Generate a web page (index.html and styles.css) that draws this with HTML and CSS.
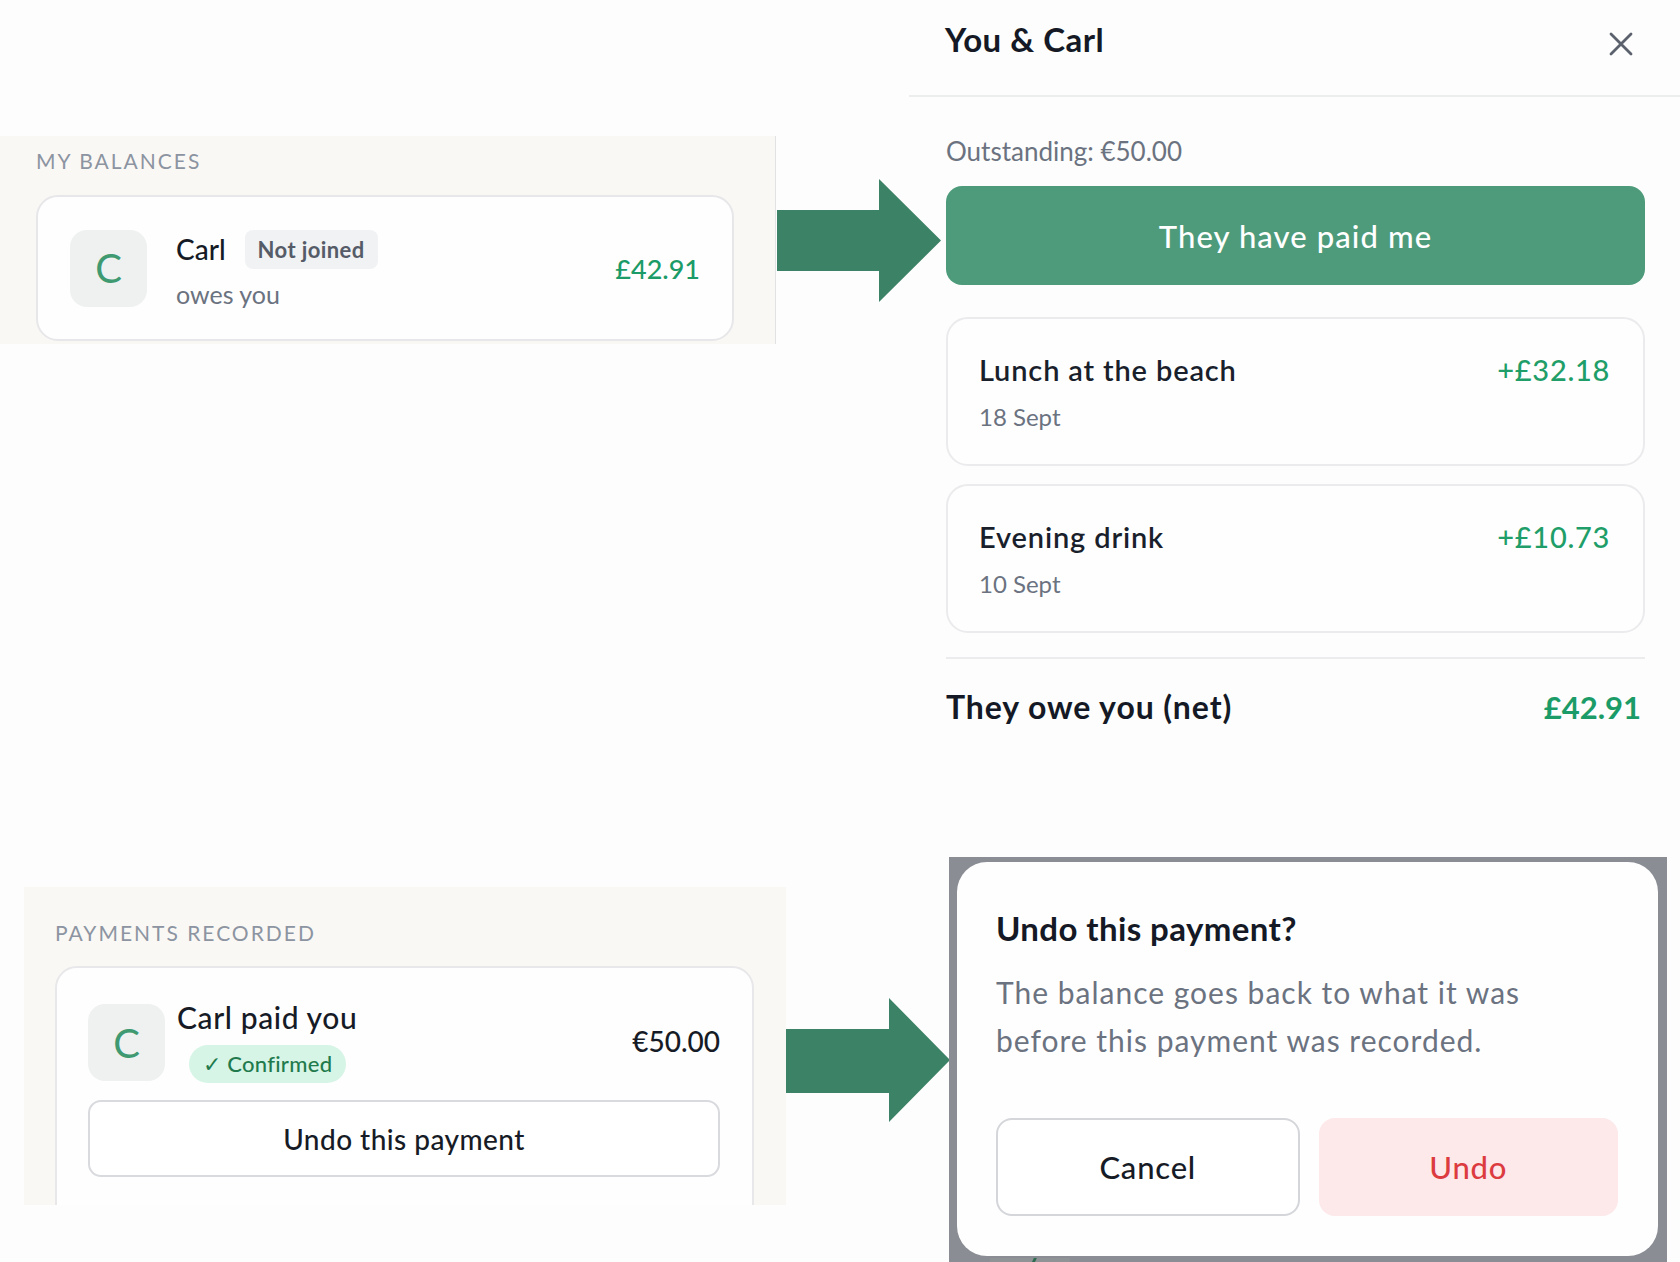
FILE: index.html
```html
<!DOCTYPE html>
<html lang="en">
<head>
<meta charset="utf-8">
<title>Settle up flow</title>
<link rel="stylesheet" href="styles.css">
</head>
<body>
<div class="canvas">

  <section class="shot shot-balances">
    <div class="section-label">My balances</div>
    <div class="balance-card">
      <div class="avatar">C</div>
      <div class="who">
        <div class="who-top"><span class="name">Carl</span><span class="badge-muted">Not joined</span></div>
        <div class="sub">owes you</div>
      </div>
      <div class="amount-pos">£42.91</div>
    </div>
  </section>

  <svg class="arrow arrow-1" width="164" height="123" viewBox="0 0 164 123" aria-hidden="true">
    <polygon points="0,31 102,31 102,0 164,61.5 102,123 102,92 0,92" fill="#3c8266"/>
  </svg>

  <section class="shot shot-detail">
    <header class="detail-head">
      <h1 class="detail-title">You &amp; Carl</h1>
      <span class="close" aria-label="Close">
        <svg width="24" height="24" viewBox="0 0 24 24"><path d="M2 2 L22 22 M22 2 L2 22" stroke="#5b626e" stroke-width="2.8" stroke-linecap="round" fill="none"/></svg>
      </span>
    </header>
    <div class="detail-body">
      <p class="outstanding">Outstanding: €50.00</p>
      <button class="btn-primary">They have paid me</button>
      <div class="expense">
        <div class="expense-row"><span class="expense-title">Lunch at the beach</span><span class="expense-amt">+£32.18</span></div>
        <div class="expense-date">18 Sept</div>
      </div>
      <div class="expense">
        <div class="expense-row"><span class="expense-title">Evening drink</span><span class="expense-amt">+£10.73</span></div>
        <div class="expense-date">10 Sept</div>
      </div>
      <div class="net">
        <span class="net-label">They owe you (net)</span>
        <span class="net-amt">£42.91</span>
      </div>
    </div>
  </section>

  <section class="shot shot-payments">
    <div class="section-label">Payments recorded</div>
    <div class="payment-card">
      <div class="payment-row">
        <div class="avatar">C</div>
        <div class="payment-info">
          <div class="payment-title">Carl paid you</div>
          <span class="badge-ok">✓ Confirmed</span>
        </div>
        <div class="payment-amt">€50.00</div>
      </div>
      <button class="btn-outline">Undo this payment</button>
    </div>
  </section>

  <svg class="arrow arrow-2" width="164" height="124" viewBox="0 0 164 124" aria-hidden="true">
    <polygon points="0,31 103,31 103,0 164,62 103,124 103,95 0,95" fill="#3c8266"/>
  </svg>

  <section class="shot shot-dialog">
    <div class="dialog">
      <h2 class="dialog-title">Undo this payment?</h2>
      <p class="dialog-text">The balance goes back to what it was before this payment was recorded.</p>
      <div class="dialog-actions">
        <button class="btn-cancel">Cancel</button>
        <button class="btn-danger">Undo</button>
      </div>
    </div>
    <div class="dim-peek"><span class="dim-mark"></span></div>
  </section>

</div>
</body>
</html>
```

FILE: styles.css
```css
* { box-sizing: border-box; }

body {
  margin: 0;
  background: #fcfdfc;
  font-family: "Lato", "Open Sans", sans-serif;
  color: #171c27;
}

.canvas {
  position: relative;
  width: 1680px;
  height: 1262px;
  overflow: hidden;
}

button {
  font-family: inherit;
  cursor: pointer;
}

/* free-canvas pieces of the composite */
.shot { position: absolute; overflow: hidden; }
.arrow { position: absolute; display: block; }
.arrow-1 { left: 777px; top: 179px; }
.arrow-2 { left: 786px; top: 998px; }

.section-label {
  font-size: 21px;
  line-height: 26px;
  letter-spacing: 2px;
  text-transform: uppercase;
  color: #8c94a1;
}

.avatar {
  flex: none;
  width: 77px;
  height: 77px;
  border-radius: 17px;
  background: #eef1f0;
  color: #3f9a72;
  font-size: 40px;
  font-weight: 400;
  display: flex;
  align-items: center;
  justify-content: center;
}

/* ---------- balances ---------- */
.shot-balances {
  left: 0;
  top: 136px;
  width: 776px;
  height: 208px;
  background: #faf8f5;
  border-right: 1px solid #e2e2e2;
  padding: 12px 0 0 36px;
}

.shot-balances .section-label { margin-bottom: 21px; }

.balance-card {
  width: 698px;
  height: 146px;
  background: #fefefe;
  border: 2px solid #e7e7ea;
  border-radius: 22px;
  display: flex;
  align-items: center;
  padding: 0 32px 0 32px;
}

.who { margin-left: 29px; }

.who-top {
  display: flex;
  align-items: center;
  gap: 19px;
  margin-top: 2px;
}

.name {
  font-size: 28px;
  font-weight: 500;
  color: #151a25;
}

.badge-muted {
  height: 39px;
  line-height: 39px;
  padding: 0 13px;
  border-radius: 8px;
  background: #f1f2f3;
  color: #555c68;
  font-size: 22px;
  letter-spacing: 0.4px;
  font-weight: 700;
}

.sub {
  margin-top: 10px;
  font-size: 25px;
  line-height: 30px;
  color: #6b7280;
}

.amount-pos {
  margin-left: auto;
  font-size: 27px;
  font-weight: 500;
  color: #1b9b67;
}

/* ---------- detail ---------- */
.shot-detail {
  left: 909px;
  top: 0;
  width: 771px;
  height: 760px;
}

.detail-head {
  height: 97px;
  border-bottom: 2px solid #eceeee;
  display: flex;
  align-items: center;
  justify-content: space-between;
  padding: 0 47px 17px 36px;
}

.detail-title {
  margin: 0;
  font-size: 33px;
  letter-spacing: 0.5px;
  font-weight: 700;
  color: #141925;
}

.close {
  display: flex;
  margin-top: 9px;
}

.detail-body {
  padding: 0 35px 0 37px;
}

.outstanding {
  margin: 37px 0 0;
  font-size: 26px;
  line-height: 34px;
  color: #6b7280;
}

.btn-primary {
  display: block;
  width: 100%;
  height: 99px;
  margin-top: 18px;
  border: none;
  border-radius: 16px;
  background: #4e9b7b;
  color: #ffffff;
  font-size: 31px;
  letter-spacing: 1.1px;
  font-weight: 500;
}

.expense {
  height: 149px;
  margin-top: 32px;
  border: 2px solid #ebebed;
  border-radius: 22px;
  background: #fefefe;
  padding: 32px 33px 0 31px;
}

.expense + .expense { margin-top: 18px; }

.expense-row {
  display: flex;
  justify-content: space-between;
  align-items: center;
  line-height: 38px;
}

.expense-title {
  font-size: 29px;
  letter-spacing: 0.85px;
  font-weight: 600;
  color: #1a1f2c;
}

.expense-amt {
  font-size: 29px;
  letter-spacing: 0.7px;
  font-weight: 500;
  color: #1f9e69;
}

.expense-date {
  margin-top: 12px;
  font-size: 24px;
  line-height: 31px;
  color: #6b7280;
}

.net {
  margin-top: 24px;
  border-top: 2px solid #ececee;
  padding: 28px 4px 0 0;
  display: flex;
  justify-content: space-between;
  align-items: center;
  line-height: 40px;
  font-size: 32px;
  font-weight: 700;
}

.net-label { color: #141925; letter-spacing: 0.9px; }
.net-amt { color: #1b9b67; font-size: 31px; }

/* ---------- payments ---------- */
.shot-payments {
  left: 24px;
  top: 887px;
  width: 762px;
  height: 318px;
  background: #faf8f5;
  padding: 33px 0 0 31px;
}

.shot-payments .section-label { margin-bottom: 20px; }

.payment-card {
  width: 699px;
  height: 300px;
  background: #fefefe;
  border: 2px solid #e8e8ea;
  border-radius: 22px;
  padding: 34px 32px 0 31px;
}

.payment-row {
  display: flex;
  align-items: center;
}

.payment-info {
  margin-left: 12px;
  display: flex;
  flex-direction: column;
  align-items: flex-start;
}

.payment-title {
  font-size: 30px;
  letter-spacing: 0.6px;
  font-weight: 500;
  line-height: 36px;
  margin-top: -3px;
  color: #161b26;
}

.badge-ok {
  margin: 10px 0 0 12px;
  height: 38px;
  line-height: 38px;
  padding: 0 14px;
  border-radius: 19px;
  background: #d6f5e6;
  color: #1f7a4d;
  font-size: 22px;
  letter-spacing: 0.3px;
  font-weight: 500;
}

.payment-amt {
  margin-left: auto;
  margin-bottom: 4px;
  font-size: 28px;
  font-weight: 500;
  color: #161b26;
}

.btn-outline {
  display: block;
  width: 632px;
  height: 77px;
  margin-top: 17px;
  border: 2px solid #d9dade;
  border-radius: 13px;
  background: #ffffff;
  color: #161b26;
  font-size: 28px;
  letter-spacing: 0.45px;
  font-weight: 500;
}

/* ---------- dialog ---------- */
.shot-dialog {
  left: 949px;
  top: 857px;
  width: 718px;
  height: 405px;
  background: #8a8d94;
  padding: 5px 9px 0 8px;
}

.dialog {
  height: 394px;
  background: #fefefe;
  border-radius: 30px;
  padding: 46px 40px 0 39px;
}

.dialog-title {
  margin: 0;
  font-size: 33px;
  letter-spacing: 0.4px;
  line-height: 40px;
  font-weight: 700;
  color: #141925;
}

.dialog-text {
  margin: 20px 0 0;
  max-width: 580px;
  font-size: 30px;
  line-height: 48px;
  letter-spacing: 1px;
  color: #6b7280;
}

.dialog-actions {
  margin-top: 54px;
  display: flex;
  gap: 19px;
}

.dialog-actions button {
  flex: 1;
  height: 98px;
  border-radius: 16px;
  font-size: 31px;
  letter-spacing: 0.8px;
  font-weight: 500;
}

.btn-cancel {
  background: #ffffff;
  border: 2px solid #d4d6da;
  color: #161b26;
}

.btn-danger {
  background: #fde8ea;
  border: none;
  color: #dc3b3f;
}

/* dimmed content peeking below the dialog */
.dim-peek {
  width: 80px;
  height: 8px;
  margin: 2px 0 0 33px;
  background: #8f9396;
  position: relative;
}

.dim-mark {
  position: absolute;
  left: 42px;
  top: 0;
  width: 3px;
  height: 8px;
  background: #2f6b50;
  transform: skewX(-25deg);
}
```
